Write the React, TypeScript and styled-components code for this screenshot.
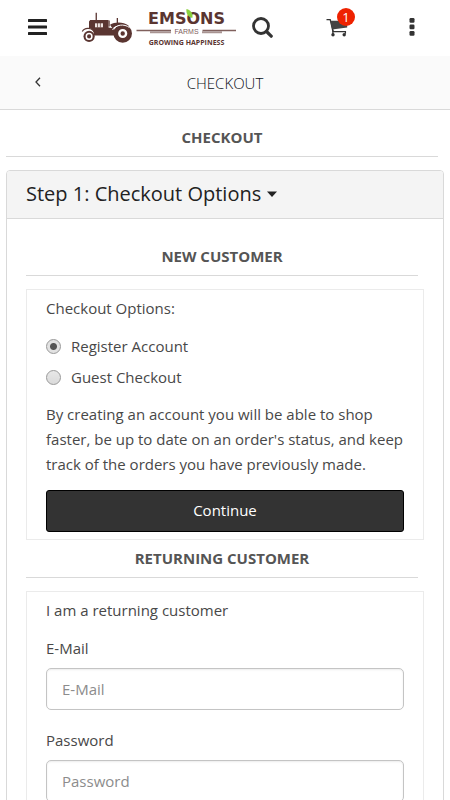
import React from "react";
import styled, { createGlobalStyle } from "styled-components";

const GlobalStyle = createGlobalStyle`
  *, *::before, *::after { box-sizing: border-box; }
  body {
    margin: 0;
    background: #fff;
    color: #484848;
    font-family: "Open Sans", "Noto Sans", sans-serif;
    font-size: 15px;
    font-weight: 400;
    line-height: 25px;
  }
`;

const TopBar = styled.header`
  display: flex;
  align-items: center;
  justify-content: space-between;
  height: 56px;
  padding: 0 24px;
`;

const Group = styled.div`
  display: flex;
  align-items: center;
  gap: 29px;
`;

const IconButton = styled.button`
  display: flex;
  align-items: center;
  justify-content: center;
  position: relative;
  width: 28px;
  height: 40px;
  padding: 0;
  border: 0;
  background: none;
  color: #333;
`;

const LogoLink = styled.a`
  display: block;
  height: 40px;
`;

const Badge = styled.span`
  position: absolute;
  top: 0;
  right: -4px;
  width: 18px;
  height: 18px;
  border-radius: 50%;
  background: #ee2200;
  color: #fff;
  font: 400 13px/18px "Open Sans", sans-serif;
  text-align: center;
`;

const Actions = styled.div`
  display: flex;
  align-items: center;
  justify-content: space-between;
  flex: 0 1 178px;
`;

const SubBar = styled.nav`
  display: grid;
  grid-template-columns: 28px 1fr 28px;
  align-items: center;
  height: 54px;
  padding: 0 24px;
  border-bottom: 1px solid #d9d9d9;
  background: #fafafa;
  color: #0c1020;
  font-weight: 300;
  line-height: 24px;
  text-align: center;
`;

const Content = styled.main`
  padding: 15px 6px 0;
`;

const titleStyles = `
  margin: 0 6px 13px 0;
  padding-bottom: 6px;
  border-bottom: 1px solid #d9d9d9;
  color: #555;
  font-size: 15px;
  font-weight: 700;
  line-height: 25px;
  text-align: center;
  text-transform: uppercase;
`;

const PageTitle = styled.h1`
  ${titleStyles}
`;

const SectionTitle = styled.h2`
  ${titleStyles}
`;

const Panel = styled.section`
  border: 1px solid #d9d9d9;
  border-radius: 4px;
  overflow: hidden;
`;

const PanelHeading = styled.button`
  display: flex;
  align-items: center;
  gap: 6px;
  width: 100%;
  height: 48px;
  padding: 0 19px 2px;
  border: 0;
  border-bottom: 1px solid #d9d9d9;
  background: #f4f4f4;
  color: #222;
  font: inherit;
  font-size: 20px;
`;

const PanelBody = styled.div`
  padding: 25px 19px 20px;
`;

const Box = styled.form`
  display: flex;
  flex-direction: column;
  margin-bottom: 6px;
  padding: 6px 19px 7px;
  border: 1px solid #ebebeb;
`;

const Paragraph = styled.p`
  margin: 0 0 13px;
`;

const Choice = styled.label`
  display: flex;
  align-items: center;
  gap: 10px;
  margin-bottom: 6px;
`;

const Radio = styled.input`
  appearance: none;
  width: 15px;
  height: 15px;
  margin: 0;
  border: 1px solid #999;
  border-radius: 50%;
  background: linear-gradient(#e8e8e8, #dadada);

  &:checked {
    background: radial-gradient(circle, #555 0 3px, #e2e2e2 4px);
  }
`;

const Terms = styled.p`
  margin: 6px 0 13px;
`;

const Submit = styled.button`
  height: 42px;
  padding: 0 0 2px;
  border: 1px solid #000;
  border-radius: 3px;
  background: #333;
  color: #fff;
  font: inherit;
`;

const Field = styled.div`
  display: flex;
  flex-direction: column;
  gap: 7px;
  margin-bottom: 18px;
`;

const TextInput = styled.input`
  width: 100%;
  height: 42px;
  padding: 0 15px;
  border: 1px solid #c4c4c4;
  border-radius: 5px;
  background: #fff;
  box-shadow: inset 0 1px 2px rgba(0, 0, 0, 0.08);
  color: #484848;
  font: inherit;

  &::placeholder { color: #8c8c8c; opacity: 1; }
`;

const MenuIcon = () => (
  <svg width="20" height="18" viewBox="0 0 20 18" fill="#222" aria-hidden="true">
    <rect x="0" y="0" width="19" height="3" rx="0.5" />
    <rect x="0" y="6.5" width="19" height="3" rx="0.5" />
    <rect x="0" y="13" width="19" height="3" rx="0.5" />
  </svg>
);

const SearchIcon = () => (
  <svg width="22" height="22" viewBox="0 0 22 22" fill="none" stroke="currentColor" aria-hidden="true">
    <circle cx="10" cy="9" r="7.5" strokeWidth="2.8" />
    <path d="m15.5 14.5 4.7 4.7" strokeWidth="3.2" strokeLinecap="round" />
  </svg>
);

const CartIcon = () => (
  <svg width="22" height="20" viewBox="0 0 22 20" aria-hidden="true">
    <path d="M.5 1.6h3.7l2.8 12h12.4v2.2" fill="none" stroke="#333" strokeWidth="1.3" />
    <path d="M4.3 2.8H21.2v6.6L6.2 11.6Z" fill="#444" />
    <path d="M6.9 11.5v5" fill="none" stroke="#333" strokeWidth="1.3" />
    <circle cx="7" cy="16.8" r="1.7" fill="#333" />
    <circle cx="18.2" cy="16.8" r="1.7" fill="#333" />
  </svg>
);

const MoreIcon = () => (
  <svg width="6" height="20" viewBox="0 0 6 20" fill="currentColor" aria-hidden="true">
    <rect x=".5" y="0" width="5" height="4.8" rx="1.2" />
    <rect x=".5" y="6.5" width="5" height="4.8" rx="1.2" />
    <rect x=".5" y="13" width="5" height="4.8" rx="1.2" />
  </svg>
);

const BackIcon = () => (
  <svg width="8" height="12" viewBox="0 0 8 12" fill="none" stroke="currentColor" aria-hidden="true">
    <path d="M6 .8 2 5l4 4.2" strokeWidth="1.3" />
  </svg>
);

const CaretIcon = () => (
  <svg width="10" height="6" viewBox="0 0 10 6" fill="currentColor" aria-hidden="true">
    <path d="M0 .5h10L5 6Z" />
  </svg>
);

const Logo = () => (
  <svg width="156" height="40" viewBox="81 8 156 40" role="img" aria-label="Emsons Farms">
    <g fill="#5a3531">
      <path d="M95.6 12.8h1.3v7.4h-1.3zM89 21.5l1.2-1.6H108.500v7.600l6 1v7H94v-3.200a6.600 6.600 0 0 0-5-4.400z" />
      <path d="M108.500 20.500h1.200v6h-1.200zM116.700 18h1.300v6h-1.300z" />
      <path d="M82.300 31.600c2.200-4.400 10-4.400 12.200 1.200" fill="none" stroke="#5a3531" strokeWidth="1.200" />
      <path d="M110 24.800c5-3.400 13.500-3.200 18.500.8v2.200c-4.500-3.500-11.500-3.600-16 .7z" />
      <circle cx="89.100" cy="36.400" r="5.600" />
      <circle cx="122.700" cy="33.500" r="9.300" />
    </g>
    <path d="M112.500 30c3.600-5.400 11.500-6.600 17-2.400" fill="none" stroke="#fff" />
    <g fill="none" stroke="#fff">
      <circle cx="89.100" cy="36.400" r="2.800" strokeWidth="1.500" />
      <circle cx="122.700" cy="33.500" r="3.400" strokeWidth="2.400" />
    </g>
    <path d="M95 23.300h8v4h-8z" fill="#eee4e2" />
    <path d="M97.500 23v4.500M100.400 23v4.500" stroke="#5a3531" strokeWidth=".7" />
    <path d="M136.500 30.500H171M202.500 30.500H236" stroke="#80605d" strokeWidth="1.300" />
    <path d="M150 32.300h21M202 32.300h20" stroke="#a89492" strokeWidth="2" />
    <g fill="#5a3531" textAnchor="middle">
      <text x="186.500" y="24" fontFamily="DejaVu Sans" fontSize="16" fontWeight="700">EMSONS</text>
      <text x="186.500" y="34" fontFamily="Liberation Sans" fontSize="7" fill="#80605d">FARMS</text>
      <text x="186.500" y="45" fontFamily="Open Sans" fontSize="7" fontWeight="700">GROWING HAPPINESS</text>
    </g>
    <path d="M186.500 9c4.500 1.300 6.800 4.800 5.800 9-3.800-.8-6.600-4-5.800-9Z" fill="#8bd13e" />
  </svg>
);

export default function App() {
  return (
    <>
      <GlobalStyle />
      <TopBar>
        <Group>
          <IconButton aria-label="Menu"><MenuIcon /></IconButton>
          <LogoLink href="#" aria-label="Emsons Farms home"><Logo /></LogoLink>
        </Group>
        <Actions>
          <IconButton aria-label="Search"><SearchIcon /></IconButton>
          <IconButton aria-label="Cart"><CartIcon /><Badge>1</Badge></IconButton>
          <IconButton aria-label="More options"><MoreIcon /></IconButton>
        </Actions>
      </TopBar>
      <SubBar>
        <IconButton aria-label="Back"><BackIcon /></IconButton>
        <span>CHECKOUT</span>
      </SubBar>
      <Content>
        <PageTitle>Checkout</PageTitle>
        <Panel>
          <PanelHeading aria-expanded="true">Step 1: Checkout Options<CaretIcon /></PanelHeading>
          <PanelBody>
            <SectionTitle>New Customer</SectionTitle>
            <Box onSubmit={(e) => e.preventDefault()}>
              <Paragraph>Checkout Options:</Paragraph>
              <Choice><Radio type="radio" name="account" value="register" defaultChecked />Register Account</Choice>
              <Choice><Radio type="radio" name="account" value="guest" />Guest Checkout</Choice>
              <Terms>
                By creating an account you will be able to shop faster, be up to date on an order's
                status, and keep track of the orders you have previously made.
              </Terms>
              <Submit type="submit">Continue</Submit>
            </Box>
            <SectionTitle>Returning Customer</SectionTitle>
            <Box onSubmit={(e) => e.preventDefault()}>
              <Paragraph>I am a returning customer</Paragraph>
              <Field>
                <label htmlFor="email">E-Mail</label>
                <TextInput id="email" type="email" placeholder="E-Mail" />
              </Field>
              <Field>
                <label htmlFor="password">Password</label>
                <TextInput id="password" type="password" placeholder="Password" />
              </Field>
            </Box>
          </PanelBody>
        </Panel>
      </Content>
    </>
  );
}
